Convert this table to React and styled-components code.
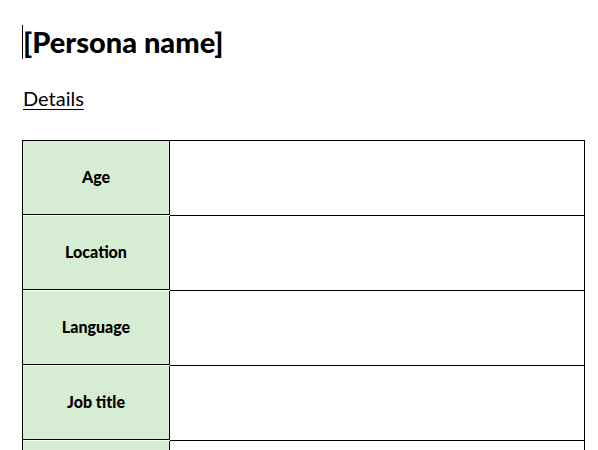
import React from 'react'
import styled, { createGlobalStyle } from 'styled-components'

const GlobalStyle = createGlobalStyle`
  body {
    margin: 0;
    background: #fff;
    font-family: Lato, "Noto Sans", sans-serif;
    color: #000;
  }
`

const Page = styled.div`
  padding: 22px 13px 0 22px;
`

const Title = styled.h1`
  margin: 0;
  font-size: 29px;
  font-weight: 900;
  line-height: 40px;
  display: flex;
  align-items: center;
`

const Caret = styled.span`
  display: inline-block;
  width: 1px;
  height: 34px;
  background: #000;
`

const Subheading = styled.div`
  margin-top: 24px;
  font-size: 20px;
  line-height: 24px;
  text-decoration: underline;
  text-underline-offset: 3px;
  text-decoration-thickness: 1px;
  padding-left: 1px;
`

const Table = styled.div`
  margin-top: 30px;
  display: grid;
  grid-template-columns: 147px 1fr;
  border-top: 1px solid #000;
  border-left: 1px solid #000;
`

const Label = styled.div`
  height: 74px;
  background: #d6ecd3;
  border-right: 1px solid #000;
  border-bottom: 1px solid #000;
  display: flex;
  align-items: center;
  justify-content: center;
  padding-bottom: 2px;
  box-sizing: border-box;
  font-size: 16px;
  font-weight: 900;
`

const Value = styled.div`
  height: 74px;
  border-right: 1px solid #000;
  border-bottom: 1px solid #000;
`

const rows = ['Age', 'Location', 'Language', 'Job title', '']

export default function App() {
  return (
    <>
      <GlobalStyle />
      <Page>
        <Title>
          <Caret />
          [Persona name]
        </Title>
        <Subheading>Details</Subheading>
        <Table>
          {rows.map((r, i) => (
            <React.Fragment key={i}>
              <Label>{r}</Label>
              <Value />
            </React.Fragment>
          ))}
        </Table>
      </Page>
    </>
  )
}
